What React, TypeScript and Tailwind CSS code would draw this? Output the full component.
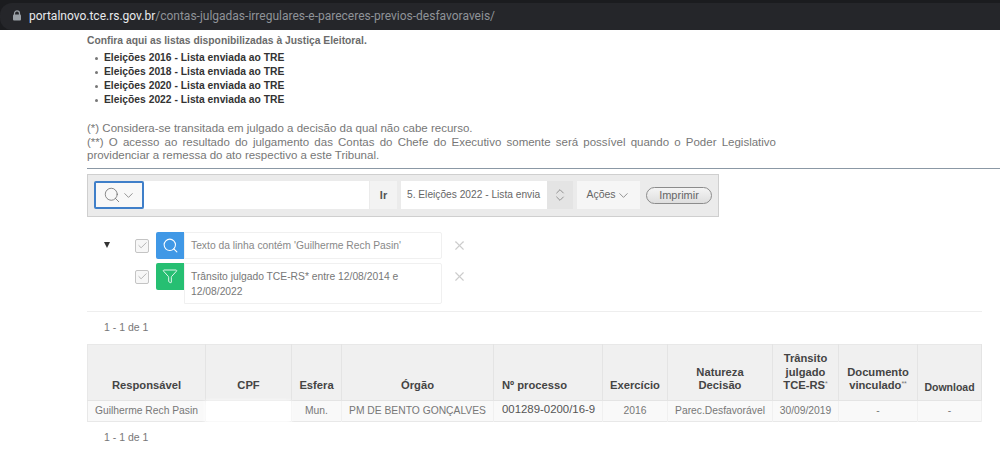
import { ChevronDown, ChevronsUpDown, Filter, Search, X, Check } from "lucide-react";

const listas = ["2016", "2018", "2020", "2022"];

const headers = [
  { w: "w-[118px]", label: <>Responsável</> },
  { w: "w-[86px]", label: <>CPF</> },
  { w: "w-[50px]", label: <>Esfera</> },
  { w: "w-[152px]", label: <>Órgão</> },
  { w: "w-[109px]", label: <>Nº processo</>, left: true },
  { w: "w-[65px]", label: <>Exercício</> },
  { w: "w-[105px]", label: <>Natureza<br />Decisão</> },
  { w: "w-[66px]", label: <>Trânsito<br />julgado<br />TCE-RS<sup className="text-[7px] font-normal text-[#777]">*</sup></> },
  { w: "w-[79px]", label: <>Documento<br />vinculado<sup className="text-[7px] font-normal text-[#777]">**</sup></> },
  { w: "w-[64px]", label: <span className="relative top-[2px] text-[10.5px]">Download</span> },
];

const cells = ["Guilherme Rech Pasin", "", "Mun.", "PM DE BENTO GONÇALVES", "001289-0200/16-9", "2016", "Parec.Desfavorável", "30/09/2019", "-", "-"];

function FilterRow({ color, icon, text, tall }: { color: string; icon: React.ReactNode; text: React.ReactNode; tall?: boolean }) {
  return (
    <div className="flex items-start">
      <span className="mt-[7px] mr-[7px] flex h-[14px] w-[14px] items-center justify-center rounded-[2px] border border-[#c4c4c4] bg-[#f7f7f7] text-[#888]">
        <Check size={11} strokeWidth={1.3} />
      </span>
      <span className={`flex h-[27px] w-[28px] items-center justify-center rounded-l-[2px] text-white ${color}`}>{icon}</span>
      <div className={`w-[258px] rounded-r-[2px] border border-[#f0f0f0] bg-white px-[6px] text-[10.3px] leading-[15px] text-[#777] ${tall ? "h-[41px] pt-[5px]" : "h-[27px] pt-[5px]"}`}>
        {text}
      </div>
      <X size={15} strokeWidth={1.8} className="mt-[6px] ml-[10px] text-[#cccccc]" />
    </div>
  );
}

export default function App() {
  return (
    <div className="h-[462px] w-[1000px] overflow-hidden bg-white font-['Liberation_Sans',Arial,sans-serif]">
      <div className="flex h-[30px] items-end bg-[#1b1c1f]">
        <div className="flex h-[27px] w-full items-center rounded-l-[12px] bg-[#25262a] pb-[2px] pl-[12px]">
          <svg width="10" height="11" viewBox="0 0 10 11" className="mr-[7px] text-[#9aa0a6]">
            <path d="M2.5 5V3.4a2.5 2.5 0 0 1 5 0V5" fill="none" stroke="currentColor" strokeWidth="1.2" />
            <rect x="1" y="4.6" width="8" height="6" rx="1" fill="currentColor" />
          </svg>
          <span className="font-['Roboto',sans-serif] text-[12px] leading-none text-[#e8eaed]">
            portalnovo.tce.rs.gov.br<span className="text-[#8f9398]">/contas-julgadas-irregulares-e-pareceres-previos-desfavoraveis/</span>
          </span>
        </div>
      </div>

      <div className="pl-[87px]">
        <p className="pt-[4px] text-[10.3px] leading-[13px] font-bold text-[#6b6b6b]">Confira aqui as listas disponibilizadas à Justiça Eleitoral.</p>
        <ul className="mt-[4px] list-none pl-[17px]">
          {listas.map((ano) => (
            <li key={ano} className="relative text-[10.3px] leading-[14px] font-bold text-[#333]">
              <span className="absolute top-[6px] left-[-9px] h-[3px] w-[3px] rounded-full bg-[#777]" />
              Eleições {ano} - Lista enviada ao TRE
            </li>
          ))}
        </ul>
        <div className="mt-[15px] w-[689px] text-[11.5px] leading-[13.5px] text-[#777]">
          <p>(*) Considera-se transitada em julgado a decisão da qual não cabe recurso.</p>
          <p className="text-justify">(**) O acesso ao resultado do julgamento das Contas do Chefe do Executivo somente será possível quando o Poder Legislativo providenciar a remessa do ato respectivo a este Tribunal.</p>
        </div>
        <div className="mt-[5px] h-px bg-[#8b98a5]" />

        <div className="mt-[5px] flex h-[43px] w-[632px] items-center border border-[#cfcfcf] bg-[#ebebeb] pl-[6px]">
          <div className="flex h-[28px] w-[50px] items-center justify-center rounded-[2px] border-2 border-[#3f7fc9] bg-[#f8f8f8] text-[#666]">
            <Search size={18} strokeWidth={1} />
            <ChevronDown size={15} strokeWidth={1.1} />
          </div>
          <div className="h-[28px] w-[225px] bg-white" />
          <div className="ml-px flex h-[28px] w-[27px] items-center justify-center bg-[#f3f3f3] text-[11px] font-bold text-[#555]">Ir</div>
          <div className="ml-[4px] flex h-[28px] w-[146px] items-center bg-white pl-[6px] text-[10.2px] whitespace-nowrap text-[#666]">5. Eleições 2022 - Lista envia</div>
          <div className="flex h-[28px] w-[26px] items-center justify-center bg-[#e4e4e4] text-[#666]">
            <ChevronsUpDown size={16} strokeWidth={1} />
          </div>
          <div className="ml-[4px] flex h-[28px] w-[63px] items-center justify-center bg-[#f6f6f6] text-[10.5px] text-[#666]">
            Ações <ChevronDown size={15} strokeWidth={1.1} />
          </div>
          <div className="ml-[6px] flex h-[17px] w-[66px] items-center justify-center rounded-full border border-[#8c8c8c] bg-gradient-to-b from-[#f4f4f4] to-[#dedede] text-[11px] text-[#666]">Imprimir</div>
        </div>

        <div className="mt-[15px] flex">
          <span className="mt-[10px] ml-[17px] h-0 w-0 border-x-[3.5px] border-t-[6px] border-x-transparent border-t-[#333]" />
          <div className="ml-[25px] flex flex-col gap-[4px]">
            <FilterRow color="bg-[#4098e6]" icon={<Search size={17} strokeWidth={1.5} />} text={<span className="text-[#888]">Texto da linha contém 'Guilherme Rech Pasin'</span>} />
            <FilterRow color="bg-[#26bf72]" icon={<Filter size={16} strokeWidth={1.3} />} text={<>Trânsito julgado TCE-RS* entre 12/08/2014 e<br />12/08/2022</>} tall />
          </div>
        </div>

        <div className="mt-[7px] h-px w-[895px] bg-[#eeeeee]" />
        <p className="mt-[9px] pl-[17px] text-[10.5px] leading-[12px] text-[#777]">1 - 1 de 1</p>

        <div className="relative mt-[11px] w-[895px]">
          <table className="w-[895px] table-fixed border border-[#e8e8e8]">
            <thead>
              <tr className="h-[56px] bg-[#f0f0f0]">
                {headers.map((h, i) => (
                  <th key={i} className={`${h.w} border-r border-[#e4e4e4] pb-[7px] align-bottom text-[11.2px] leading-[13.5px] font-bold whitespace-nowrap text-[#444] ${h.left ? "pl-[8px] text-left" : "text-center"}`}>{h.label}</th>
                ))}
              </tr>
            </thead>
            <tbody>
              <tr className="h-[21px] border-t border-[#e4e4e4] bg-[#f9f9f9]">
                {cells.map((c, i) => (
                  <td key={i} className={`border-r border-[#f0f0f0] text-[10.3px] whitespace-nowrap ${i === 4 ? "pb-[2px] pl-[8px] text-left text-[11.4px] text-[#555]" : "text-center text-[#777]"} ${i === 1 ? "bg-white" : ""}`}>{c}</td>
                ))}
              </tr>
            </tbody>
          </table>
          <div className="absolute top-[57px] left-[118px] h-[22px] w-[86px] bg-white blur-[2px]" />
        </div>
        <p className="mt-[9px] pl-[17px] text-[10.5px] leading-[12px] text-[#777]">1 - 1 de 1</p>
      </div>
    </div>
  );
}
